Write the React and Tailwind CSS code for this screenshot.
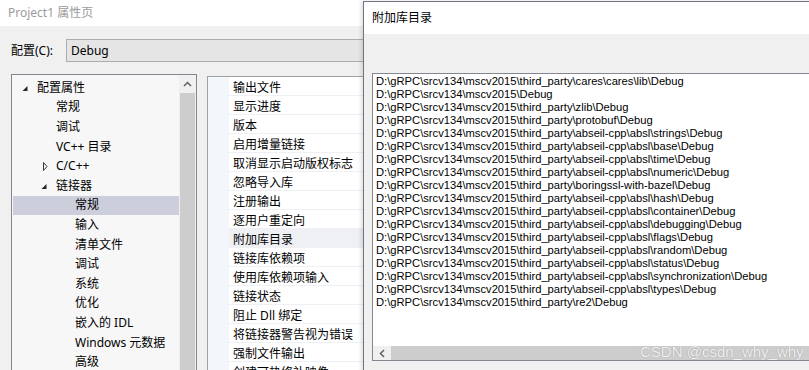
import React from "react";

const BS = "\\";
const base = ["D:", "gRPC", "srcv134", "mscv2015"];
const mk = (...parts) => [...base, ...parts].join(BS);
const tp = (...parts) => mk("third_party", ...parts);
const lines = [
  tp("cares", "cares", "lib", "Debug"),
  mk("Debug"),
  tp("zlib", "Debug"),
  tp("protobuf", "Debug"),
  tp("abseil-cpp", "absl", "strings", "Debug"),
  tp("abseil-cpp", "absl", "base", "Debug"),
  tp("abseil-cpp", "absl", "time", "Debug"),
  tp("abseil-cpp", "absl", "numeric", "Debug"),
  tp("boringssl-with-bazel", "Debug"),
  tp("abseil-cpp", "absl", "hash", "Debug"),
  tp("abseil-cpp", "absl", "container", "Debug"),
  tp("abseil-cpp", "absl", "debugging", "Debug"),
  tp("abseil-cpp", "absl", "flags", "Debug"),
  tp("abseil-cpp", "absl", "random", "Debug"),
  tp("abseil-cpp", "absl", "status", "Debug"),
  tp("abseil-cpp", "absl", "synchronization", "Debug"),
  tp("abseil-cpp", "absl", "types", "Debug"),
  tp("re2", "Debug"),
];

const tree = [
  { t: "配置属性", lvl: 0, arrow: "open" },
  { t: "常规", lvl: 1 },
  { t: "调试", lvl: 1 },
  { t: "VC++ 目录", lvl: 1 },
  { t: "C/C++", lvl: 1, arrow: "closed" },
  { t: "链接器", lvl: 1, arrow: "open" },
  { t: "常规", lvl: 2, sel: true },
  { t: "输入", lvl: 2 },
  { t: "清单文件", lvl: 2 },
  { t: "调试", lvl: 2 },
  { t: "系统", lvl: 2 },
  { t: "优化", lvl: 2 },
  { t: "嵌入的 IDL", lvl: 2 },
  { t: "Windows 元数据", lvl: 2 },
  { t: "高级", lvl: 2 },
];

const props = [
  "输出文件",
  "显示进度",
  "版本",
  "启用增量链接",
  "取消显示启动版权标志",
  "忽略导入库",
  "注册输出",
  "逐用户重定向",
  "附加库目录",
  "链接库依赖项",
  "使用库依赖项输入",
  "链接状态",
  "阻止 Dll 绑定",
  "将链接器警告视为错误",
  "强制文件输出",
  "创建可热修补映像",
];

function Arrow({ kind }) {
  if (kind === "open")
    return (
      <svg width="10" height="12" viewBox="0 0 10 12" className="block">
        <polygon points="7.5,4 7.5,9 2.5,9" fill="#262626" />
      </svg>
    );
  if (kind === "closed")
    return (
      <svg width="10" height="12" viewBox="0 0 10 12" className="block">
        <path d="M4.5 2.5 L8 6.5 L4.5 10.5 Z" fill="none" stroke="#3a3a3a" strokeWidth="1" />
      </svg>
    );
  return <span className="block w-[10px]" />;
}

const indent = ["pl-[8px]", "pl-[27px]", "pl-[46px]"];

export default function App() {
  return (
    <div className="relative w-[809px] h-[370px] overflow-hidden bg-[#f0f0f0] font-['Noto_Sans','Noto_Sans_CJK_SC',sans-serif] text-[12px] text-black leading-none">
      {/* background property window */}
      <div className="flex flex-col">
        <div className="h-[26px] bg-white flex items-center pl-[8px] text-[#9b9b9b]">
          Project1 属性页
        </div>
        <div className="flex items-center mt-[13px] h-[23px]">
          <span className="w-[66px] pl-[11px]">配置(C):</span>
          <div className="h-[23px] w-[400px] border border-[#adadad] bg-[#e5e5e5] pl-[4px] flex items-center">
            Debug
          </div>
        </div>
        <div className="flex mt-[12px] items-start">
          {/* tree */}
          <div className="ml-[11px] w-[186px] h-[320px] border border-[#828790] bg-[#f7f7f7] flex">
            <div className="flex-1 pt-[3px]">
              {tree.map((it, i) => (
                <div
                  key={i}
                  className={`h-[19.6px] flex items-center ${indent[it.lvl]} ${it.sel ? "bg-[#cccedb] ml-[1px]" : ""}`}
                >
                  <span className={it.sel ? "-ml-[1px] flex" : "flex"}>
                    <Arrow kind={it.arrow} />
                  </span>
                  <span className="ml-[7px] whitespace-nowrap">{it.t}</span>
                </div>
              ))}
            </div>
            <div className="w-[17px] bg-[#f0f0f0] flex flex-col items-center">
              <div className="h-[18px] flex items-center justify-center">
                <svg width="9" height="6" viewBox="0 0 9 6" className="block">
                  <path d="M1 5 L4.5 1.5 L8 5" fill="none" stroke="#606060" strokeWidth="1.5" />
                </svg>
              </div>
              <div className="w-[15px] flex-1 bg-[#cdcdcd]" />
            </div>
          </div>
          {/* property grid */}
          <div className="ml-[10px] mt-[2px] w-[600px] h-[320px] border-l border-t border-[#a0a0a0] bg-white">
            {props.map((p, i) => (
              <div key={i} className="h-[19px] flex">
                <div className="w-[21px] bg-[#f3f6fb]" />
                <div
                  className={`flex-1 flex items-center pl-[4px] pt-[4px] border-b border-[#eef0f4] whitespace-nowrap ${i === 8 ? "bg-[#eff0f4]" : ""}`}
                >
                  {p}
                </div>
              </div>
            ))}
          </div>
        </div>
      </div>

      {/* overlay dialog */}
      <div className="absolute left-[363px] top-[1px] w-[470px] h-[400px] border-l border-t border-[#6f7480] bg-[#f0f0f0] shadow-[-2px_0_4px_rgba(0,0,0,0.12)] flex flex-col">
        <div className="h-[32px] bg-white flex items-center pl-[8px] pb-[1px]">附加库目录</div>
        <div className="pl-[8px] pt-[39px]">
          <div className="h-[288px] border border-[#828790] bg-white flex flex-col">
            <div className="flex-1 pl-[3px] pt-[1px] font-['Liberation_Sans',Arial,sans-serif] text-[11.2px]">
              {lines.map((l, i) => (
                <div key={i} className="h-[13px] leading-[13px] whitespace-nowrap">
                  {l}
                </div>
              ))}
            </div>
            <div className="h-[14px] flex relative">
              <div className="w-[18px] bg-[#f0f0f0] flex items-center justify-center">
                <svg width="6" height="9" viewBox="0 0 6 9" className="block">
                  <path d="M5 1 L1.5 4.5 L5 8" fill="none" stroke="#606060" strokeWidth="1.5" />
                </svg>
              </div>
              <div className="flex-1 bg-[#cdcdcd]" />
              <span className="absolute left-[267px] top-[-2px] font-['Liberation_Sans',Arial,sans-serif] text-[15px] leading-[16px] text-[#f2f2f2] [text-shadow:0_0_1px_#8a8a8a] whitespace-nowrap">
                CSDN @csdn_why_why
              </span>
            </div>
          </div>
        </div>
      </div>
    </div>
  );
}
